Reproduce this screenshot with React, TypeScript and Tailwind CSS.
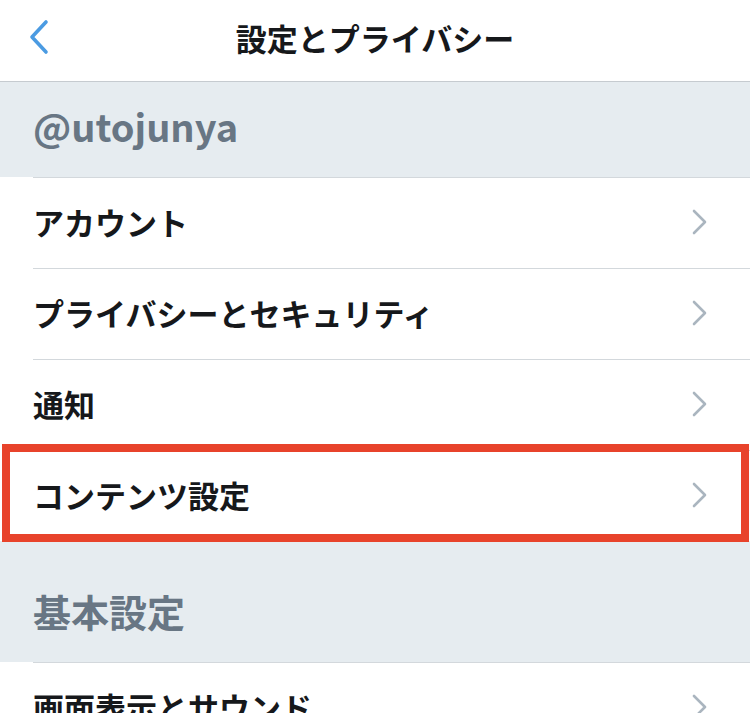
import { ReactNode } from "react";

const font = { fontFamily: '"Noto Sans CJK JP", "Noto Sans", sans-serif' };

function Chevron() {
  return (
    <svg width="16" height="26" viewBox="0 0 16 26" fill="none" aria-hidden="true">
      <path d="M2 2l11 11L2 24" stroke="#aab5bf" strokeWidth="2.6" strokeLinecap="round" strokeLinejoin="round" />
    </svg>
  );
}

function SectionHeader({ label, tall }: { label: string; tall?: boolean }) {
  return (
    <div
      className={`flex flex-col justify-end bg-[#e6ecf0] pl-[33px] pb-[28px] ${tall ? "h-[121px]" : "h-[95px]"}`}
    >
      <span className="text-[38px] font-bold leading-[46px] text-[#687684]">{label}</span>
    </div>
  );
}

function Row({ label, children }: { label: string; children?: ReactNode }) {
  return (
    <div className="relative bg-white pl-[33px]">
      <div className="flex h-[91px] items-center justify-between border-t border-[#d3d8dc] pb-[3px] pr-[42px]">
        <span className="text-[31px] font-bold leading-none text-[#16181b]">{label}</span>
        <Chevron />
      </div>
      {children}
    </div>
  );
}

export default function App() {
  return (
    <div className="h-[713px] w-[750px] overflow-hidden bg-white" style={font}>
      {/* Nav bar */}
      <div className="relative flex h-[82px] items-center justify-center border-b border-[#c6cbd0] bg-white pb-[7px]">
        <svg
          className="absolute left-[26px] top-[19px]"
          width="24"
          height="36"
          viewBox="0 0 24 36"
          fill="none"
          aria-hidden="true"
        >
          <path d="M20 3L6 18l14 15" stroke="#4b9be2" strokeWidth="3.6" strokeLinecap="round" strokeLinejoin="round" />
        </svg>
        <h1 className="text-[31px] font-bold leading-none text-[#16181b]">設定とプライバシー</h1>
      </div>

      <SectionHeader label="@utojunya" />
      <Row label="アカウント" />
      <Row label="プライバシーとセキュリティ" />
      <Row label="通知" />
      <Row label="コンテンツ設定">
        {/* highlight annotation */}
        <div className="pointer-events-none absolute left-[2px] right-[1px] top-[-6px] bottom-[-1px] border-[8px] border-[#e8432b]" />
      </Row>
      <SectionHeader label="基本設定" tall />
      <Row label="画面表示とサウンド" />
    </div>
  );
}
